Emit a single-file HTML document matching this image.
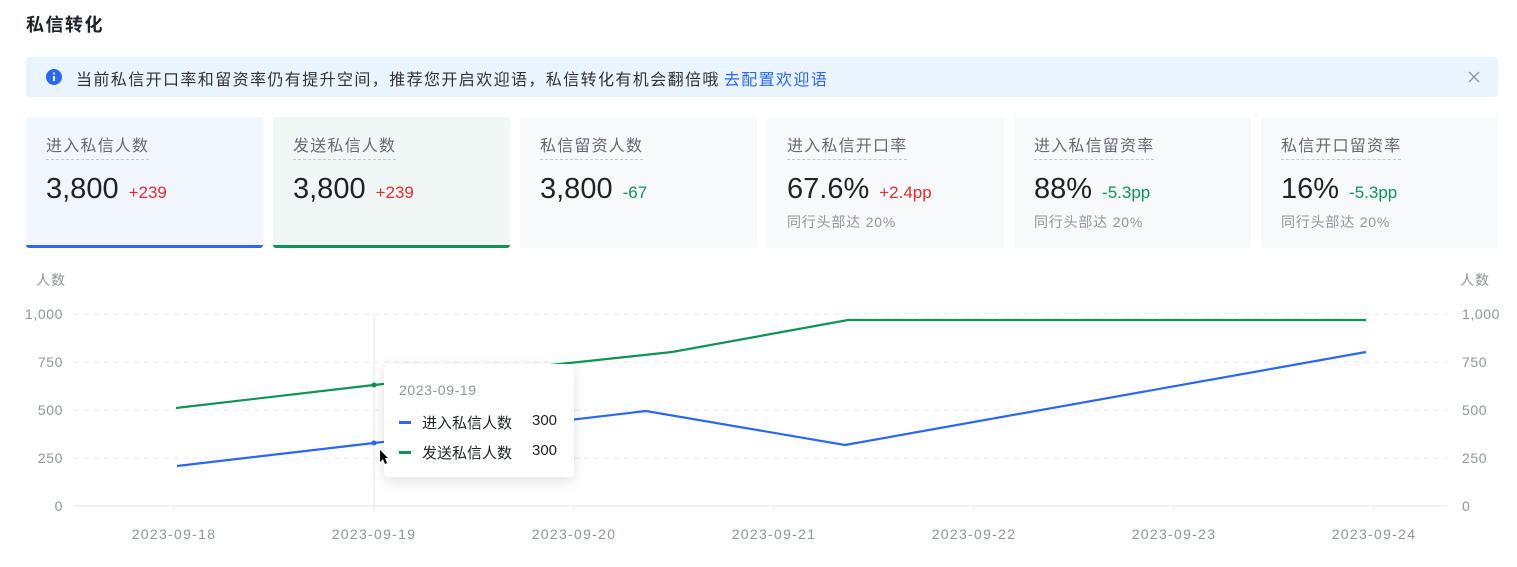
<!DOCTYPE html>
<html><head><meta charset="utf-8"><style>
*{margin:0;padding:0;box-sizing:border-box}
body{width:1517px;height:567px;background:#fff;font-family:"Liberation Sans","Noto Sans CJK SC",sans-serif;position:relative;overflow:hidden;color:#1f2329}
.abs{position:absolute}
.title{left:26px;top:11px;font-size:18px;font-weight:bold;color:#1f2329;letter-spacing:1.5px}
.alert{left:26px;top:57px;width:1472px;height:40px;background:#eaf4ff;border-radius:3px}
.alert .txt{position:absolute;left:50px;top:9px;font-size:16px;color:#333;white-space:nowrap;letter-spacing:1.4px}
.alert a{color:#2b66f6;text-decoration:none;margin-left:4px}
.card{top:117px;width:237px;height:131px;background:#f8f9fb;border-radius:3px}
.card .lab{position:absolute;left:20px;top:20px;font-size:16px;color:#646a73;border-bottom:1px dashed #c5c8cc;padding-bottom:2px;line-height:20px;letter-spacing:1.2px}
.card .val{position:absolute;left:20px;top:56px;font-size:29px;color:#1f2329;white-space:nowrap}
.card .val span{font-size:17px;margin-left:10px}
.card .sub{position:absolute;left:20px;top:95px;font-size:14px;color:#8f959e;letter-spacing:0.8px}
.r{color:#e22d2d}.g{color:#0f9455}
.tt{font-size:15px;color:#1f2329}
</style></head><body>
<div class="abs title">私信转化</div>
<div class="abs alert">
<svg class="abs" style="left:20px;top:12px" width="16" height="16" viewBox="0 0 16 16"><circle cx="8" cy="8" r="8" fill="#2b66f6"/><rect x="7" y="7" width="2" height="5" fill="#fff"/><circle cx="8" cy="4.5" r="1.1" fill="#fff"/></svg>
<div class="txt">当前私信开口率和留资率仍有提升空间，推荐您开启欢迎语，私信转化有机会翻倍哦<a>去配置欢迎语</a></div>
<svg class="abs" style="left:1441px;top:13px" width="14" height="14" viewBox="0 0 14 14"><path d="M2 2L12 12M12 2L2 12" stroke="#8f959e" stroke-width="1.4"/></svg>
</div>
<div class="abs card" style="left:26px;background:#f2f6fe;border-bottom:3px solid #2b66f6"><div class="lab">进入私信人数</div><div class="val">3,800<span class="r">+239</span></div></div>
<div class="abs card" style="left:273px;background:#f1f7f4;border-bottom:3px solid #0f9455"><div class="lab">发送私信人数</div><div class="val">3,800<span class="r">+239</span></div></div>
<div class="abs card" style="left:520px"><div class="lab">私信留资人数</div><div class="val">3,800<span class="g">-67</span></div></div>
<div class="abs card" style="left:767px"><div class="lab">进入私信开口率</div><div class="val">67.6%<span class="r">+2.4pp</span></div><div class="sub">同行头部达 20%</div></div>
<div class="abs card" style="left:1014px"><div class="lab">进入私信留资率</div><div class="val">88%<span class="g">-5.3pp</span></div><div class="sub">同行头部达 20%</div></div>
<div class="abs card" style="left:1261px"><div class="lab">私信开口留资率</div><div class="val">16%<span class="g">-5.3pp</span></div><div class="sub">同行头部达 20%</div></div>

<svg class="abs" style="left:0;top:0" width="1517" height="567">
<g font-family="Liberation Sans,Noto Sans CJK SC,sans-serif" font-size="14" fill="#8f959e">
<text x="36" y="285" letter-spacing="1">人数</text><text x="1460" y="285" letter-spacing="1">人数</text>
<g text-anchor="end" letter-spacing="0.6"><text x="63" y="319">1,000</text><text x="63" y="367">750</text><text x="63" y="415">500</text><text x="63" y="463">250</text><text x="63" y="511">0</text></g>
<g letter-spacing="0.6"><text x="1462" y="319">1,000</text><text x="1462" y="367">750</text><text x="1462" y="415">500</text><text x="1462" y="463">250</text><text x="1462" y="511">0</text></g>
<g text-anchor="middle" letter-spacing="1.3"><text x="174" y="539">2023-09-18</text><text x="374" y="539">2023-09-19</text><text x="574" y="539">2023-09-20</text><text x="774" y="539">2023-09-21</text><text x="974" y="539">2023-09-22</text><text x="1174" y="539">2023-09-23</text><text x="1374" y="539">2023-09-24</text></g>
</g>
<g stroke="#e8eaed" stroke-dasharray="5 5"><line x1="74" y1="314" x2="1447" y2="314"/><line x1="74" y1="362" x2="1447" y2="362"/><line x1="74" y1="410" x2="1447" y2="410"/><line x1="74" y1="458" x2="1447" y2="458"/></g>
<line x1="74" y1="506" x2="1447" y2="506" stroke="#e5e7ea"/>
<g stroke="#e5e7ea"><line x1="174" y1="506" x2="174" y2="511"/><line x1="374" y1="506" x2="374" y2="511"/><line x1="574" y1="506" x2="574" y2="511"/><line x1="774" y1="506" x2="774" y2="511"/><line x1="974" y1="506" x2="974" y2="511"/><line x1="1174" y1="506" x2="1174" y2="511"/><line x1="1374" y1="506" x2="1374" y2="511"/></g>
<line x1="374" y1="314" x2="374" y2="506" stroke="#e5e7ea"/>
<polyline points="176,408 374,385 560,364 672,352 848,320 1366,320" fill="none" stroke="#0f9455" stroke-width="2.2"/>
<polyline points="177,466 374,443 646,411 845,445 1366,352" fill="none" stroke="#2b66f6" stroke-width="2.2"/>
<circle cx="374" cy="385" r="2.5" fill="#0f9455"/><circle cx="374" cy="443" r="2.5" fill="#2b66f6"/>
</svg>
<div class="abs" style="left:384px;top:364px;width:190px;height:113px;background:#fff;border-radius:4px;box-shadow:0 4px 14px rgba(0,0,0,.12)">
<div class="abs" style="left:15px;top:18px;font-size:14px;color:#8f959e;letter-spacing:0.6px">2023-09-19</div>
<div class="abs" style="left:15px;top:57px;width:12px;height:3px;background:#2b66f6"></div>
<div class="abs tt" style="left:38px;top:48px">进入私信人数</div>
<div class="abs tt" style="left:148px;top:48px">300</div>
<div class="abs" style="left:15px;top:87px;width:12px;height:3px;background:#0f9455"></div>
<div class="abs tt" style="left:38px;top:78px">发送私信人数</div>
<div class="abs tt" style="left:148px;top:78px">300</div>
</div>
<svg class="abs" style="left:379px;top:449px" width="10" height="16" viewBox="0 0 10 16"><path d="M1 1L1 13L4 10L6 15L8 14L6 9L9 9Z" fill="#000"/></svg>
</body></html>
